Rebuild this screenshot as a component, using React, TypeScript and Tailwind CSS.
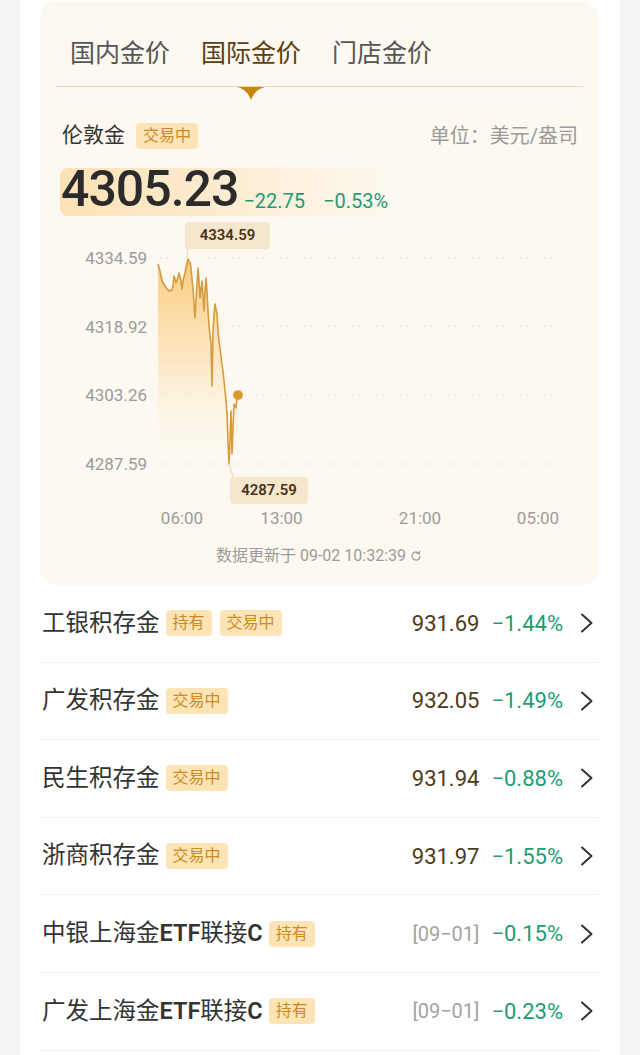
import React from 'react';

const linePts: [number, number][] = [
  [158, 263], [160, 270], [162, 280], [165, 285], [167, 288], [170, 290], [172, 289], [173, 285],
  [174, 275], [176, 282], [178, 276], [179, 272], [181, 280], [182, 288], [183, 280], [185, 272],
  [186, 267], [188, 258], [190, 262], [191, 267], [192, 278], [193, 287], [195, 317], [196, 300],
  [197, 283], [198, 267], [199, 280], [200, 297], [201, 288], [202, 280], [203, 295], [204, 310],
  [205, 290], [206, 277], [207, 290], [208, 310], [209, 325], [211, 343], [212, 385], [213, 330],
  [214, 315], [215, 303], [216, 308], [217, 313], [218, 330], [219, 340], [220, 347], [221, 356],
  [222, 363], [223, 370], [224, 380], [225, 390], [226, 400], [227, 413], [228, 440], [229, 463],
  [230, 440], [231, 410], [232, 453], [233, 427], [234, 403], [235, 405], [236, 407], [237, 395],
  [238, 394],
];

const linePath = linePts.map(([x, y], i) => `${i ? 'L' : 'M'}${x} ${y}`).join(' ');
const areaPath = `${linePath} L238 463 L158 463 Z`;

const Badge: React.FC<{ text: string }> = ({ text }) => (
  <span className="inline-flex items-center h-[26px] px-[7px] rounded-[4px] bg-[#fde4b6] text-[#cc8a20] text-[16px] whitespace-nowrap">
    {text}
  </span>
);

const Chevron = () => (
  <svg width="14" height="20" viewBox="0 0 14 20" fill="none" className="block">
    <path d="M2 1.5 L11.5 10 L2 18.5" stroke="#333" strokeWidth="2" strokeLinecap="round" strokeLinejoin="round" />
  </svg>
);

type Row = {
  name: React.ReactNode;
  badges: string[];
  price?: string;
  date?: string;
  pct: string;
};

const rows: Row[] = [
  { name: '工银积存金', badges: ['持有', '交易中'], price: '931.69', pct: '−1.44%' },
  { name: '广发积存金', badges: ['交易中'], price: '932.05', pct: '−1.49%' },
  { name: '民生积存金', badges: ['交易中'], price: '931.94', pct: '−0.88%' },
  { name: '浙商积存金', badges: ['交易中'], price: '931.97', pct: '−1.55%' },
  {
    name: (
      <>
        中银上海金<span className="font-semibold">ETF</span>联接<span className="font-semibold">C</span>
      </>
    ),
    badges: ['持有'],
    date: '[09−01]',
    pct: '−0.15%',
  },
  {
    name: (
      <>
        广发上海金<span className="font-semibold">ETF</span>联接<span className="font-semibold">C</span>
      </>
    ),
    badges: ['持有'],
    date: '[09−01]',
    pct: '−0.23%',
  },
];

export default function App() {
  return (
    <div className="min-h-screen bg-[#f4f4f4] font-[Roboto,'Noto_Sans_CJK_SC',sans-serif]">
      <div className="mx-[20px] w-[600px] bg-white pl-[20px] pr-[22px] pt-[1px] min-h-[1055px]">
        {/* price card */}
        <div className="rounded-[16px] bg-[#fdf9f0] pt-[36px] pb-[18px]">
          <div className="flex gap-[31px] pl-[30px] text-[25px] leading-[34px]">
            <span className="text-[#555]">国内金价</span>
            <span className="text-[#5c3d12]">国际金价</span>
            <span className="text-[#555]">门店金价</span>
          </div>
          <div className="mx-[15px] mt-[15px] h-px bg-[#eadbb8]" />
          <div className="ml-[197px] h-[13px]">
            <svg width="28" height="13" viewBox="0 0 28 13" className="block">
              <path d="M0 0 L28 0 C20 2 17 6 14 13 C11 6 8 2 0 0 Z" fill="#c8860f" />
            </svg>
          </div>

          <div className="mt-[22px] flex items-center pl-[22px] pr-[20px] h-[28px]">
            <span className="text-[21px] text-[#333]">伦敦金</span>
            <span className="ml-[11px] flex">
              <Badge text="交易中" />
            </span>
            <span className="ml-auto text-[20px] text-[#9a9a9a]">单位：美元/盎司</span>
          </div>

          <div className="mt-[18px] ml-[20px] w-[330px] h-[48px] rounded-[8px] bg-gradient-to-r from-[#fde2b6] via-[#fdecd2] to-[#fdf9f0] flex items-end pb-[5px] pl-[1px]">
            <span className="text-[50px] leading-[44px] font-medium tracking-[-1px] text-[#2b2b2b]">4305.23</span>
            <span className="ml-[5px] text-[20px] leading-[20px] text-[#1f9b74]">−22.75</span>
            <span className="ml-[18px] text-[20px] leading-[20px] text-[#1f9b74]">−0.53%</span>
          </div>

          {/* chart */}
          <div className="relative flex h-[290px]">
            <div className="w-[107px] flex flex-col items-end pt-[32px] gap-[48.7px] text-[17px] leading-[20px] text-[#9b9b9b]">
              <span>4334.59</span>
              <span>4318.92</span>
              <span>4303.26</span>
              <span>4287.59</span>
            </div>
            <svg width="410" height="290" viewBox="150 215 410 290" className="ml-[3px]">
              <defs>
                <linearGradient id="area" x1="0" y1="258" x2="0" y2="463" gradientUnits="userSpaceOnUse">
                  <stop offset="0" stopColor="#f8c670" stopOpacity="0.9" />
                  <stop offset="0.5" stopColor="#fbdca6" stopOpacity="0.6" />
                  <stop offset="1" stopColor="#fdf9f0" stopOpacity="0" />
                </linearGradient>
              </defs>
              {[257, 325, 394, 463].map((y) => (
                <line key={y} x1="160" x2="556" y1={y} y2={y} stroke="#efe4cf" strokeWidth="1" strokeDasharray="2 4" />
              ))}
              <path d={areaPath} fill="url(#area)" />
              <path d={linePath} fill="none" stroke="#d69b3e" strokeWidth="1.6" strokeLinejoin="round" />
              <line x1="187.5" y1="247" x2="187.5" y2="258" stroke="#eadcbd" strokeWidth="1.2" />
              <line x1="229" y1="463" x2="233" y2="476" stroke="#eadcbd" strokeWidth="1.2" />
              <circle cx="238" cy="394" r="4.8" fill="#d9992f" />
            </svg>
            <div className="absolute left-[145px] top-[6px] w-[85px] h-[27px] rounded-[4px] bg-[#f4e7cd] flex items-center justify-center text-[15px] font-semibold text-[#4a3216]">
              4334.59
            </div>
            <div className="absolute left-[190px] top-[261px] w-[78px] h-[27px] rounded-[4px] bg-[#f4e7cd] flex items-center justify-center text-[15px] font-semibold text-[#4a3216]">
              4287.59
            </div>
          </div>

          <div className="flex pl-[117px] h-[25px] text-[17px] leading-[25px] text-[#9b9b9b]">
            <span className="w-[50px] text-center">06:00</span>
            <span className="ml-[49.5px] w-[50px] text-center">13:00</span>
            <span className="ml-[88.5px] w-[50px] text-center">21:00</span>
            <span className="ml-[68px] w-[50px] text-center">05:00</span>
          </div>

          <div className="mt-[14px] flex items-center justify-center gap-[4px] text-[16px] leading-[22px] text-[#9b9b9b]">
            <span>数据更新于 09-02 10:32:39</span>
            <svg width="12" height="12" viewBox="0 0 12 12" fill="none">
              <path d="M10 6 A4 4 0 1 1 8.6 3" stroke="#9b9b9b" strokeWidth="1.2" strokeLinecap="round" />
              <path d="M9.6 1.2 L9.4 3.8 L6.9 3.4" stroke="#9b9b9b" strokeWidth="1.2" strokeLinecap="round" strokeLinejoin="round" />
            </svg>
          </div>
        </div>

        {/* list */}
        <div>
          {rows.map((r, i) => (
            <div key={i} className="h-[77.6px] flex items-center border-b border-[#efefef] pl-[2px] pr-[4px]">
              <span className="text-[23.5px] text-[#333] whitespace-nowrap">{r.name}</span>
              <div className="ml-[6px] flex gap-[8px]">
                {r.badges.map((b) => (
                  <Badge key={b} text={b} />
                ))}
              </div>
              <div className="ml-auto flex items-center">
                {r.price && <span className="text-[22px] text-[#4e3a1c]">{r.price}</span>}
                {r.date && <span className="text-[20px] text-[#a3a3a3]">{r.date}</span>}
                <span className="ml-[12px] text-[22px] text-[#1f9b74]">{r.pct}</span>
                <span className="ml-[17px]">
                  <Chevron />
                </span>
              </div>
            </div>
          ))}
        </div>
      </div>
    </div>
  );
}
